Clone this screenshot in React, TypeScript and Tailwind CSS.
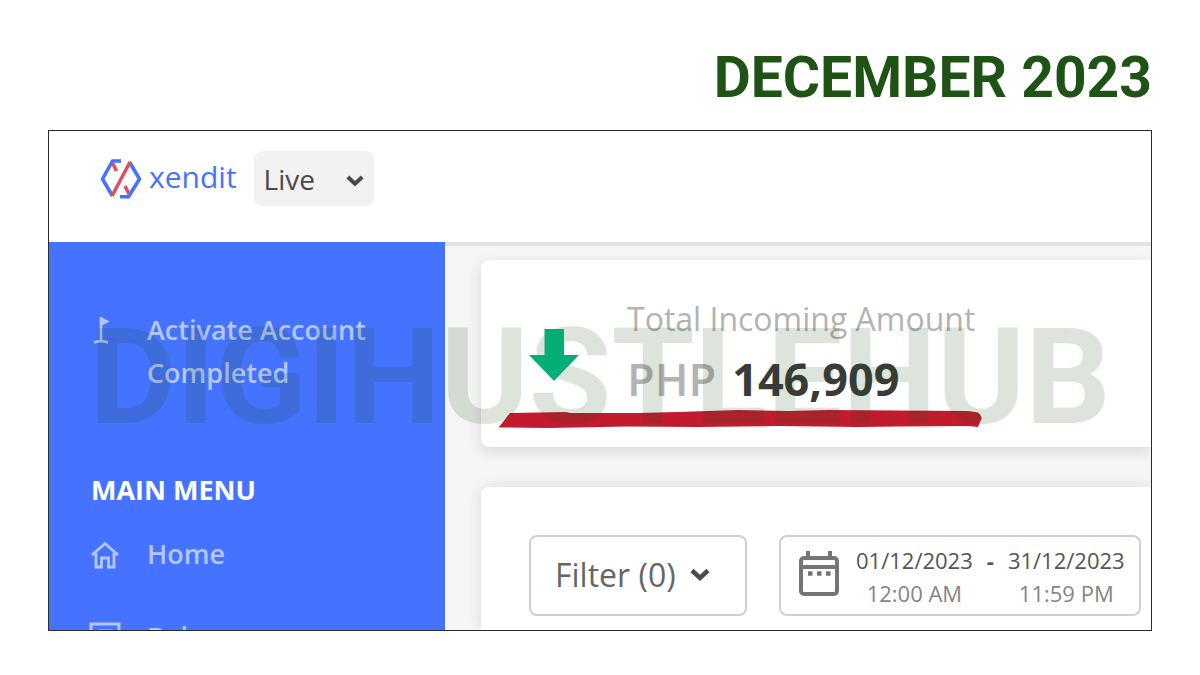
const Chevron = ({ className }: { className?: string }) => (
  <svg viewBox="0 0 20 14" className={className} fill="none" stroke="currentColor" strokeWidth="4.5">
    <path d="M2 2.5 L10 10 L18 2.5" />
  </svg>
);

const Logo = () => (
  <svg viewBox="0 0 42 40" className="w-[42px] h-10 shrink-0" fill="none" strokeWidth="3.6" strokeLinejoin="round">
    <path d="M21 2 H12.5 L2.5 20 L12.5 37" stroke="#4573ff" />
    <path d="M20 37.8 H28.5 L39.5 20 L29.5 3" stroke="#4573ff" />
    <path d="M30 3 L12 37" stroke="#d9535e" />
    <path d="M12.5 4 L16.5 12" stroke="#d9535e" />
    <path d="M25 27 L29 35" stroke="#d9535e" />
  </svg>
);

const FlagIcon = () => (
  <svg viewBox="0 0 28 28" className="w-7 h-7" fill="none" stroke="currentColor" strokeWidth="2.6">
    <path d="M10 1 V26" />
    <path d="M3 26.5 Q10 24 17 26.5" />
    <path d="M10 2 L17 5.5 L10 9 Z" fill="currentColor" strokeWidth="1.5" />
  </svg>
);

const HomeIcon = () => (
  <svg viewBox="0 0 28 28" className="w-7 h-7" fill="none" stroke="currentColor" strokeWidth="2.8">
    <path d="M1 14 L14 2.5 L27 14" />
    <path d="M5 12 V26 H10.5 V17 H17.5 V26 H23 V12" />
  </svg>
);

const BalanceIcon = () => (
  <svg viewBox="0 0 32 32" className="w-8 h-8 -mx-0.5" fill="none" stroke="currentColor" strokeWidth="3">
    <rect x="2" y="2" width="28" height="26" />
    <path d="M9 9 H23" />
  </svg>
);

const CalendarIcon = () => (
  <svg viewBox="0 0 42 46" className="mb-1 w-[42px] h-[46px] shrink-0" fill="none" stroke="#757575">
    <rect x="3" y="7" width="36" height="36" rx="3" strokeWidth="4" />
    <path d="M3 16 H39" strokeWidth="4" />
    <path d="M10 0 V7 M32 0 V7" strokeWidth="4" />
    <path d="M10 22.5 H14.5 M19 22.5 H23.5 M28 22.5 H32.5" strokeWidth="4.5" />
  </svg>
);

const menuItems = [
  { label: 'Home', icon: <HomeIcon /> },
  { label: 'Balances', icon: <BalanceIcon /> },
];

const Sidebar = () => (
  <nav className="w-[396px] shrink-0 bg-[#4573ff] pl-[42px] pt-[66px] text-[27px] font-semibold text-[#b5c7ff]">
    <a href="#activate" className="flex items-start gap-7">
      <span className="pt-2">
        <FlagIcon />
      </span>
      <span className="leading-[43px]">
        Activate Account
        <br />
        Completed
      </span>
    </a>
    <h2 className="mt-[76px] mb-[3px] font-bold leading-[40px] text-white">MAIN MENU</h2>
    <ul>
      {menuItems.map((item) => (
        <li key={item.label}>
          <a href={`#${item.label.toLowerCase()}`} className="flex h-[83px] items-center gap-7">
            {item.icon}
            {item.label}
          </a>
        </li>
      ))}
    </ul>
  </nav>
);

const TopBar = () => (
  <header className="flex h-[111px] shrink-0 items-start bg-white pl-[51px] pt-[20px]">
    <a href="#top" className="flex h-[55px] items-center gap-[7px] text-[30px] font-medium text-[#4573ff]">
      <Logo />
      <span className="pb-1">xendit</span>
    </a>
    <div className="relative ml-[17px] text-[#4a4a4a]">
      <select
        aria-label="Mode"
        className="h-[55px] w-[120px] appearance-none rounded-lg bg-[#f2f2f2] pl-2.5 text-[28px] font-medium"
      >
        <option>Live</option>
        <option>Test</option>
      </select>
      <Chevron className="pointer-events-none absolute right-2.5 top-[23px] h-3.5 w-[18px]" />
    </div>
  </header>
);

const DateTime = ({ date, time }: { date: string; time: string }) => (
  <span className="text-center leading-[33px]">
    <span className="block text-[#555]">{date}</span>
    <span className="block text-[#858585]">{time}</span>
  </span>
);

const IncomingCard = () => (
  <section className="relative flex h-[187px] shrink-0 items-center gap-12 rounded-l-lg bg-white pl-12 pb-2.5 shadow-[0_4px_14px_rgba(0,0,0,0.12)]">
    <svg viewBox="0 0 50 52" className="relative z-10 mt-3 h-[52px] w-[50px] shrink-0" fill="#04ae76">
      <path d="M15.500 0 H35 V26 H50 L25 52 L0 26 H15.500 Z" />
    </svg>
    <div className="leading-[60px] whitespace-nowrap">
      <h3 className="text-[32px] text-[#b3b3b3]">Total Incoming Amount</h3>
      <p className="text-[45px] font-bold text-[#3a3a3a]">
        <span className="mr-4 font-semibold text-[#b3b3b3]">PHP</span>
        146,909
      </p>
    </div>
    <svg viewBox="0 0 484 20" className="absolute left-[17px] top-[149px] h-5 w-[484px]" fill="#c31b2e">
      <path d="M1 18 L12 4 L40 3.500 L68 3 L72 4 L140 4 L180 3 L240 1 L290 2 L330 1 L400 1.500 L470 2 L480 3.500 Q486 8 482 13 L480 18 L470 17 L400 17.500 L360 18 L280 17 L200 18 L130 17.500 L50 19 L1 18.500 Z" />
    </svg>
  </section>
);

const FilterCard = () => (
  <section className="flex grow items-start gap-8 rounded-tl-lg bg-white pl-12 pt-12 shadow-[0_0_14px_rgba(0,0,0,0.1)]">
    <button className="flex h-[81px] w-[218px] shrink-0 items-center gap-[14px] rounded-lg border-2 border-[#cfcfcf] pb-0.5 pl-6 text-[32px] text-[#666]">
      Filter (0)
      <Chevron className="h-3.5 w-5 text-[#4a4a4a]" />
    </button>
    <button className="flex h-[81px] w-[362px] shrink-0 items-center rounded-lg border-2 border-[#cfcfcf] pl-[17px] text-[22px]">
      <CalendarIcon />
      <span className="ml-4 flex gap-3.5 pt-0.5">
        <DateTime date="01/12/2023" time="12:00 AM" />
        <span className="font-bold leading-[33px] text-[#555]">-</span>
        <DateTime date="31/12/2023" time="11:59 PM" />
      </span>
    </button>
  </section>
);

export default function App() {
  return (
    <div className="flex h-screen flex-col bg-white px-12 pb-[44px] font-['Open_Sans','Noto_Sans',sans-serif]">
      <h1 className="flex h-[130px] shrink-0 items-center justify-end pt-[26px] font-['Roboto','Open_Sans',sans-serif] text-[57px] font-bold text-[#1f5215]">
        DECEMBER 2023
      </h1>
      <div className="relative flex min-h-0 grow flex-col overflow-hidden border border-[#2b2b2b]">
        <TopBar />
        <div className="flex min-h-0 grow">
          <Sidebar />
          <main className="flex min-w-0 grow flex-col gap-10 overflow-hidden border-t-4 border-[#e3e3e3] bg-[#f5f5f5] pl-9 pt-3.5">
            <IncomingCard />
            <FilterCard />
          </main>
        </div>
        <div className="pointer-events-none absolute inset-x-0 top-[180px] text-center font-['Roboto','Open_Sans',sans-serif] text-[134px] font-bold leading-[134px] text-[#1c5015] opacity-15">
          DIGIHUSTLEHUB
        </div>
      </div>
    </div>
  );
}
